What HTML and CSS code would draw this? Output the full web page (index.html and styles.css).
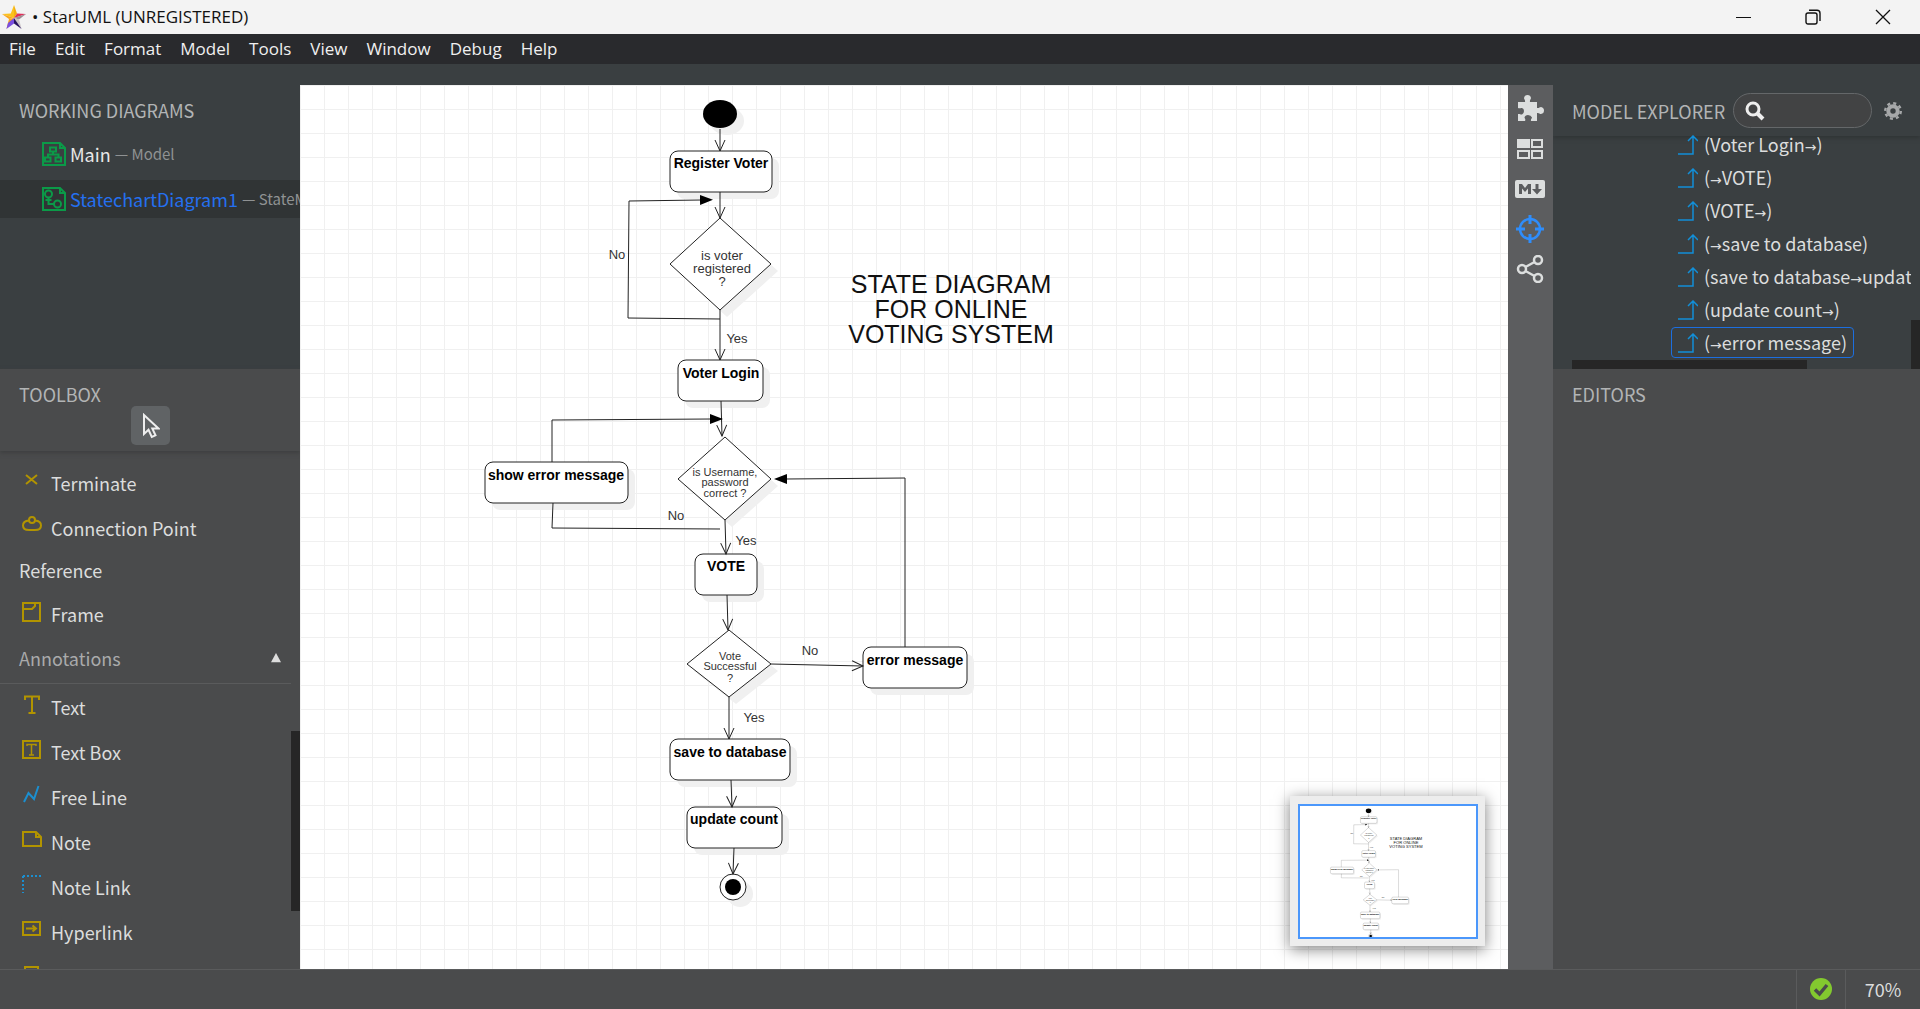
FILE: index.html
```html
<!DOCTYPE html>
<html lang="en">
<head>
<meta charset="utf-8">
<title>StarUML (UNREGISTERED)</title>
<link rel="stylesheet" href="styles.css">
</head>
<body>
<div class="app">
  <header class="titlebar">
    <svg class="logo" width="24" height="24" viewBox="0 0 24 24" aria-hidden="true">
      <path fill="#fbc21c" d="M12 0 L8.8 8.6 L0 9 L12 13 Z"/>
      <path fill="#f3b012" d="M12 0 L15 8.6 L12 13 Z"/>
      <path fill="#e0305a" d="M15 8.6 L24 9 L12 13 Z"/>
      <path fill="#f9a51c" d="M0 9 L7 14 L12 13 Z"/>
      <path fill="#9a8f93" d="M24 9 L17 14.6 L12 13 Z"/>
      <path fill="#c9c2c4" d="M17 14.6 L19.6 24 L12 13 Z"/>
      <path fill="#f9a51c" d="M7 14 L4.400 24 L12 13 Z"/>
      <path fill="#7a4fe0" d="M6 18 L4.4 24 L12 18.6 L12 13 Z"/>
      <path fill="#2b1560" d="M12 13 L19.6 24 L12 18.6 Z"/>
    </svg>
    <h1 class="window-title">• StarUML (UNREGISTERED)</h1>
    <div class="window-buttons">
      <button class="window-button" aria-label="Minimize"><svg width="16" height="16" viewBox="0 0 16 16"><path d="M1 8.5H16" stroke="#111" fill="none"/></svg></button>
      <button class="window-button" aria-label="Restore"><svg width="16" height="16" viewBox="0 0 16 16" fill="none" stroke="#111" stroke-width="1.4"><rect x="1" y="4" width="11" height="11" rx="2"/><path d="M4 1.2H12Q15 1.2 15 4.2V12"/></svg></button>
      <button class="window-button" aria-label="Close"><svg width="16" height="16" viewBox="0 0 16 16"><path d="M1 1L15 15M15 1L1 15" stroke="#111" stroke-width="1.3" fill="none"/></svg></button>
    </div>
  </header>
  <nav class="menubar">
    <button class="menu-item">File</button>
    <button class="menu-item">Edit</button>
    <button class="menu-item">Format</button>
    <button class="menu-item">Model</button>
    <button class="menu-item">Tools</button>
    <button class="menu-item">View</button>
    <button class="menu-item">Window</button>
    <button class="menu-item">Debug</button>
    <button class="menu-item">Help</button>
  </nav>
  <div class="workspace">
    <aside class="sidebar">
      <section class="diagrams">
        <h2 class="panel-title">WORKING DIAGRAMS</h2>
        <div class="diagram-list">
          <a class="diagram-row" href="#main">
            <svg class="doc-icon" width="24" height="24" viewBox="0 0 24 24"><path d="M1 1H18L23 6V23H1Z M18 1V6H23 M8 5.500H14V9.500H8Z M3 15.500H8.500V19.500H3Z M13.500 15.500H19V19.500H13.500Z M11 9.500V12.500 M6 15.500V12.500H16.500V15.500"/></svg>
            <span class="diagram-name">Main</span><span class="diagram-owner">— Model</span>
          </a>
          <a class="diagram-row selected" href="#statechart">
            <svg class="doc-icon" width="24" height="24" viewBox="0 0 24 24"><path d="M1 1H18L23 6V23H1Z M18 1V6H23 M6.500 11V17H12 M3.500 13H9.500"/><circle cx="6.500" cy="7" r="3.500"/><circle cx="15.500" cy="17" r="3.500"/></svg>
            <span class="diagram-name">StatechartDiagram1</span><span class="diagram-owner">— StateMachine1</span>
          </a>
        </div>
      </section>
      <section class="toolbox">
        <div class="toolbox-head">
          <h2 class="panel-title">TOOLBOX</h2>
          <button class="pointer-tool" aria-label="Select"><svg width="20" height="26" viewBox="0 0 20 26"><path d="M4 2V21L8.500 16.800L11.800 24L15.500 22.300L12.300 15.500H18.500Z" fill="none" stroke="#eee" stroke-width="2"/></svg></button>
        </div>
        <div class="tool-list">
          <button class="tool"><svg class="tool-icon" viewBox="0 0 20 20"><path d="M4 4L15 13M15 4L4 13"/></svg>Terminate</button>
          <button class="tool"><svg class="tool-icon" viewBox="0 0 20 20"><path d="M7 4.500Q1 5 1 9.500T7 14H13Q19 14 19 9.500T13 4.500"/><circle cx="10" cy="4" r="3"/></svg>Connection Point</button>
          <h3 class="group-name">Reference</h3>
          <button class="tool"><svg class="tool-icon" viewBox="0 0 20 20"><path d="M1 1H18V19H1Z M1 7H10L13 4V1"/></svg>Frame</button>
          <button class="group-toggle">Annotations<svg width="10" height="10" viewBox="0 0 12 12"><path d="M6 0L12 11H0Z" fill="#ddd"/></svg></button>
          <button class="tool"><svg class="tool-icon" viewBox="0 0 20 20"><path d="M3 5V1.500H17V5 M10 1.500V18 M6.500 18H13.500"/></svg>Text</button>
          <button class="tool"><svg class="tool-icon" viewBox="0 0 20 20"><path d="M1 1H18V18H1Z"/><path stroke-width="1.500" d="M5 6V4.500H14V6 M9.500 4.500V15 M7 15H12"/></svg>Text Box</button>
          <button class="tool"><svg class="tool-icon blue" viewBox="0 0 20 20"><path d="M2 17L6.500 8L12 14L16.500 1"/></svg>Free Line</button>
          <button class="tool"><svg class="tool-icon" viewBox="0 0 20 20"><path d="M1 2H14L19 7V16H1Z M14 2V7H19"/></svg>Note</button>
          <button class="tool"><svg class="tool-icon blue" viewBox="0 0 20 20"><path stroke-dasharray="2 2" stroke-width="2" d="M1 1H20M1 1V18"/></svg>Note Link</button>
          <button class="tool"><svg class="tool-icon" viewBox="0 0 20 20"><path d="M1 2H18V15H1Z M4 8.500H14M10.500 5.500L14 8.500L10.500 11.500"/></svg>Hyperlink</button>
          <button class="tool" aria-label="Image"><svg class="tool-icon" viewBox="0 0 20 20"><path d="M3 2H16V15H3Z"/></svg></button>
        </div>
      </section>
    </aside>

    <main class="canvas">
      <svg class="diagram" role="img" aria-label="State diagram for online voting system">
        <defs>
          <marker id="open" markerUnits="userSpaceOnUse" markerWidth="14" markerHeight="14" refX="12" refY="6" orient="auto"><path d="M1 1L12 6L1 11" fill="none" stroke="#222"/></marker>
          <marker id="solid" markerUnits="userSpaceOnUse" markerWidth="14" markerHeight="12" refX="1" refY="5" orient="auto"><path d="M0 0L13 5L0 10Z" fill="#000"/></marker>
        </defs>
        <g id="chart">
          <g class="shade">
            <ellipse cx="427" cy="36" rx="17" ry="14"/>
            <rect x="377" y="73" width="102" height="41" rx="8"/>
            <path d="M427 140L478 186L427 232L377 186Z"/>
            <rect x="385" y="282" width="85" height="41" rx="8"/>
            <path d="M432 359L478 401L432 442L385 401Z"/>
            <rect x="192" y="384" width="143" height="41" rx="8"/>
            <rect x="402" y="476" width="62" height="41" rx="8"/>
            <path d="M436 552L478 586L436 619L394 586Z"/>
            <rect x="570" y="569" width="104" height="41" rx="8"/>
            <rect x="377" y="661" width="120" height="41" rx="8"/>
            <rect x="394" y="729" width="95" height="41" rx="8"/>
            <circle cx="440" cy="809" r="13"/>
          </g>
          <g class="shape">
            <rect x="370" y="66" width="102" height="41" rx="8"/>
            <path d="M420 133L471 179L420 225L370 179Z"/>
            <rect x="378" y="275" width="85" height="41" rx="8"/>
            <path d="M425 352L471 394L425 435L378 394Z"/>
            <rect x="185" y="377" width="143" height="41" rx="8"/>
            <rect x="395" y="469" width="62" height="41" rx="8"/>
            <path d="M429 545L471 579L429 612L387 579Z"/>
            <rect x="563" y="562" width="104" height="41" rx="8"/>
            <rect x="370" y="654" width="120" height="41" rx="8"/>
            <rect x="387" y="722" width="95" height="41" rx="8"/>
            <circle cx="433" cy="802" r="13"/>
          </g>
          <ellipse cx="420" cy="29" rx="17" ry="14"/>
          <circle cx="433" cy="802" r="8"/>
          <g class="flow">
            <path marker-end="url(#open)" d="M420 44V66"/>
            <path marker-end="url(#open)" d="M420 107V133"/>
            <path marker-end="url(#open)" d="M420 225V275"/>
            <path marker-end="url(#open)" d="M421 316L422 351"/>
            <path marker-end="url(#open)" d="M425 435L426 469"/>
            <path marker-end="url(#open)" d="M427 510L428 545"/>
            <path marker-end="url(#open)" d="M471 579L563 581"/>
            <path marker-end="url(#open)" d="M429 612V654"/>
            <path marker-end="url(#open)" d="M431 695L432 722"/>
            <path marker-end="url(#open)" d="M434 763L433 789"/>
            <path marker-end="url(#solid)" d="M420 234L328 233L329 116L401 115"/>
            <path marker-end="url(#solid)" d="M252 377V335L411 334"/>
            <path d="M253 418L252 443L420 444"/>
            <path marker-end="url(#solid)" d="M605 562V393L486 394"/>
          </g>
          <g class="state-name">
            <text x="421" y="83">Register Voter</text>
            <text x="421" y="293">Voter Login</text>
            <text x="256" y="395">show error message</text>
            <text x="426" y="486">VOTE</text>
            <text x="615" y="580">error message</text>
            <text x="430" y="672">save to database</text>
            <text x="434" y="739">update count</text>
          </g>
          <g class="label">
            <text><tspan x="422" y="175">is voter</tspan><tspan x="422" y="188">registered</tspan><tspan x="422" y="201">?</tspan></text>
            <text x="317" y="174">No</text><text x="437" y="258">Yes</text>
            <text x="376" y="435">No</text><text x="446" y="460">Yes</text>
            <text x="510" y="570">No</text><text x="454" y="637">Yes</text>
          </g>
          <g class="label small">
            <text><tspan x="425" y="391">is Username,</tspan><tspan x="425" y="401">password</tspan><tspan x="425" y="412">correct ?</tspan></text>
            <text><tspan x="430" y="575">Vote</tspan><tspan x="430" y="585">Successful</tspan><tspan x="430" y="597">?</tspan></text>
          </g>
          <text class="heading"><tspan x="651" y="208">STATE DIAGRAM</tspan><tspan x="651" y="233">FOR ONLINE</tspan><tspan x="651" y="258">VOTING SYSTEM</tspan></text>
        </g>
      </svg>
      <div class="minimap"><svg class="minimap-view" viewBox="0 0 1080 808" aria-hidden="true"><use href="#chart"/></svg></div>
    </main>

    <nav class="strip">
      <button class="strip-button" aria-label="Extensions"><svg width="28" height="28" viewBox="0 0 28 28"><path fill="#dcdede" d="M2 7H9C9.500 5 8 4.500 8 3Q8.500 0 11.500 0T15 3C15 4.500 13.500 5 14 7H21V13C23 13.500 23.500 12 25 12Q28 12.500 28 15.500T25 19C23.500 19 23 17.500 21 18V26H15C14.500 24 16 23.500 16 22.500Q15 20 12 20T8.500 22.500C8.500 23.500 10 24 9 26H2V19C4 18.500 4.500 20 6 19.500Q8 18.500 8 16T6 13C4.500 12.500 4 14 2 13Z"/></svg></button>
      <button class="strip-button" aria-label="Layout"><svg width="28" height="28" viewBox="0 0 28 28" fill="none" stroke="#dcdede" stroke-width="2"><rect x="2" y="5" width="11" height="7" fill="#dcdede"/><rect x="16" y="5" width="10" height="7"/><rect x="2" y="16" width="11" height="7"/><rect x="16" y="16" width="10" height="7"/></svg></button>
      <button class="strip-button" aria-label="Markdown"><svg width="30" height="28" viewBox="0 0 30 28"><rect y="5" width="30" height="18" rx="2" fill="#dcdede"/><path fill="#5c5d5f" d="M4 19V9H7L10 13L13 9H16V19H13V13.500L10 17L7 13.500V19Z M20.500 9H23.500V14H27L22 19.500L17 14H20.500Z"/></svg></button>
      <button class="strip-button" aria-label="Navigate"><svg width="28" height="28" viewBox="0 0 28 28" fill="none" stroke="#2f8dfb" stroke-width="2.500"><circle cx="14" cy="14" r="10"/><path stroke-width="3" d="M14 0V9M14 19V28M0 14H9M19 14H28"/></svg></button>
      <button class="strip-button" aria-label="Share"><svg width="28" height="28" viewBox="0 0 28 28" fill="none" stroke="#dcdede" stroke-width="2.500"><circle cx="6" cy="14" r="4"/><circle cx="22" cy="5" r="4"/><circle cx="22" cy="23" r="4"/><path d="M9.500 12L18.500 7M9.500 16L18.500 21"/></svg></button>
    </nav>

    <aside class="inspector">
      <section class="explorer">
        <div class="explorer-head">
          <h2 class="panel-title">MODEL EXPLORER</h2>
          <label class="search"><svg width="20" height="20" viewBox="0 0 20 20" fill="none" stroke="#eee"><circle cx="8" cy="8" r="6" stroke-width="3"/><path d="M12 12L18 18" stroke-width="4"/></svg><input class="search-input" type="text" aria-label="Search"></label>
          <button class="settings" aria-label="Settings"><svg width="18" height="18" viewBox="0 0 18 18" fill="none" stroke="#a6a8a9"><circle cx="9" cy="9" r="4.700" stroke-width="4"/><circle cx="9" cy="9" r="7.800" stroke-width="2.400" stroke-dasharray="3.060 3.060"/></svg></button>
        </div>
        <div class="tree">
          <button class="node"><svg class="node-icon" viewBox="0 0 20 20"><path d="M0 19H15V1M10 6L15 1L20 6"/></svg><span>(Voter Login<span class="arrow">→</span>)</span></button>
          <button class="node"><svg class="node-icon" viewBox="0 0 20 20"><path d="M0 19H15V1M10 6L15 1L20 6"/></svg><span>(<span class="arrow">→</span>VOTE)</span></button>
          <button class="node"><svg class="node-icon" viewBox="0 0 20 20"><path d="M0 19H15V1M10 6L15 1L20 6"/></svg><span>(VOTE<span class="arrow">→</span>)</span></button>
          <button class="node"><svg class="node-icon" viewBox="0 0 20 20"><path d="M0 19H15V1M10 6L15 1L20 6"/></svg><span>(<span class="arrow">→</span>save to database)</span></button>
          <button class="node"><svg class="node-icon" viewBox="0 0 20 20"><path d="M0 19H15V1M10 6L15 1L20 6"/></svg><span>(save to database<span class="arrow">→</span>update count)</span></button>
          <button class="node"><svg class="node-icon" viewBox="0 0 20 20"><path d="M0 19H15V1M10 6L15 1L20 6"/></svg><span>(update count<span class="arrow">→</span>)</span></button>
          <button class="node selected"><svg class="node-icon" viewBox="0 0 20 20"><path d="M0 19H15V1M10 6L15 1L20 6"/></svg><span>(<span class="arrow">→</span>error message)</span></button>
        </div>
      </section>
      <section class="editors">
        <h2 class="panel-title">EDITORS</h2>
      </section>
    </aside>
  </div>
  <footer class="statusbar">
    <div class="status-cell"><svg width="22" height="22" viewBox="0 0 22 22"><circle cx="11" cy="11" r="11" fill="#83c92f"/><path d="M5 11.500L9.500 16L17 7" fill="none" stroke="#4a4b4c" stroke-width="3.500"/></svg></div>
    <button class="status-cell zoom-level">70%</button>
  </footer>
</div>
</body>
</html>
```
FILE: styles.css
```css
* { box-sizing: border-box; }
body { margin: 0; }
button {
  margin: 0;
  padding: 0;
  border: 0;
  background: none;
  color: inherit;
  font: inherit;
  text-align: left;
  white-space: nowrap;
}
h1, h2, h3 { margin: 0; font-size: inherit; font-weight: 400; }
svg { flex: none; }

.app {
  display: flex;
  flex-direction: column;
  height: 100vh;
  overflow: hidden;
  background: #3a3f41;
  color: #dcdddd;
  font: 18px/24px "Noto Sans CJK JP", "Noto Sans", sans-serif;
}

.titlebar {
  display: flex;
  align-items: center;
  gap: 6px;
  height: 34px;
  padding: 0 2px;
  background: #f3f3f3;
  color: #111;
  font: 17px/24px "Open Sans", sans-serif;
}
.window-title { flex: 1; }
.window-buttons { display: flex; }
.window-button {
  display: flex;
  align-items: center;
  justify-content: center;
  width: 70px;
}

.menubar {
  display: flex;
  gap: 19px;
  height: 30px;
  padding-left: 9px;
  background: #292a2d;
  color: #f0f0f0;
  font: 17px/28px "Open Sans", sans-serif;
}

.workspace {
  display: flex;
  flex: 1;
  min-height: 0;
  padding-top: 21px;
}
.panel-title { color: #b2b4b5; }

.sidebar { display: flex; flex-direction: column; width: 300px; }
.diagrams { height: 284px; padding-top: 13px; }
.diagrams .panel-title, .toolbox .panel-title { padding-left: 19px; }
.diagram-list {
  display: flex;
  flex-direction: column;
  gap: 7px;
  margin-top: 13px;
}
.diagram-row {
  display: flex;
  align-items: center;
  gap: 4px;
  height: 38px;
  padding-left: 42px;
  overflow: hidden;
  color: #e8e8e8;
  text-decoration: none;
  white-space: nowrap;
}
.diagram-row.selected { background: #303435; }
.diagram-row.selected .diagram-name { color: #2470f0; }
.diagram-owner { color: #8f9293; font-size: 15px; }
.doc-icon { fill: none; stroke: #0b9a48; stroke-width: 2; }

.toolbox {
  display: flex;
  flex: 1;
  flex-direction: column;
  min-height: 0;
  background: #4a4b4c;
}
.toolbox-head {
  display: flex;
  flex-direction: column;
  height: 82px;
  padding-top: 13px;
  box-shadow: 0 2px 4px #3e3f40;
}
.pointer-tool {
  display: flex;
  align-items: center;
  justify-content: center;
  align-self: center;
  width: 39px;
  height: 39px;
  border-radius: 5px;
  background: #606365;
}
.tool-list {
  position: relative;
  flex: 1;
  min-height: 0;
  padding-top: 9px;
  overflow: hidden;
}
.tool-list::after {
  content: "";
  position: absolute;
  top: 280px;
  right: 0;
  width: 9px;
  height: 180px;
  background: #262626;
}
.tool { display: flex; align-items: center; gap: 9px; width: 100%; height: 45px; padding-left: 22px; }
.tool-icon {
  width: 20px;
  height: 20px;
  margin-bottom: 4px;
  overflow: visible;
  fill: none;
  stroke: #b29400;
  stroke-width: 2;
}
.tool-icon.blue { stroke: #1b8fd0; }
.group-name { height: 41px; padding: 8px 19px; }
.group-toggle {
  display: flex;
  align-items: center;
  justify-content: space-between;
  width: 291px;
  height: 48px;
  padding: 0 10px 3px 19px;
  border-bottom: 1px solid #5a5b5c;
  color: #a9aaab;
}

.canvas {
  position: relative;
  flex: 1;
  min-width: 0;
  background: #fff;
  background-image:
    linear-gradient(to right, #f0f0f0 1px, transparent 1px),
    linear-gradient(#f0f0f0 1px, transparent 1px);
  background-size: 24px 24px;
}
.diagram { display: block; width: 100%; height: 100%; }
.shade { fill: #f0f0f0; }
.shape { fill: #fff; stroke: #222; stroke-width: 1; }
.flow { fill: none; stroke: #222; }
.state-name, .label, .heading {
  font-family: "Liberation Sans", Arial, sans-serif;
  text-anchor: middle;
}
.state-name { font-size: 14px; font-weight: 700; }
.label { font-size: 13px; fill: #333; }
.label.small { font-size: 11px; }
.heading { font-size: 25px; fill: #111; }
.minimap {
  position: absolute;
  right: 23px;
  bottom: 23px;
  padding: 8px 7px 7px 8px;
  background: #ededed;
  box-shadow: 0 3px 14px rgba(0, 0, 0, 0.5);
}
.minimap-view {
  display: block;
  width: 180px;
  height: 135px;
  border: 2px solid #4b97fb;
  background: #fff;
}

.strip {
  display: flex;
  flex-direction: column;
  width: 45px;
  padding: 4px 2px 0 0;
  background: #5c5d5f;
}
.strip-button { display: flex; align-items: center; justify-content: center; height: 40px; }

.inspector { display: flex; flex-direction: column; width: 367px; }
.explorer { position: relative; height: 284px; overflow: hidden; }
.explorer-head {
  display: flex;
  align-items: center;
  gap: 8px;
  height: 51px;
  padding: 0 18px 0 19px;
  box-shadow: 0 2px 4px #303435;
}
.explorer-head .panel-title { white-space: nowrap; }
.search {
  display: flex;
  flex: 1;
  align-items: center;
  min-width: 0;
  height: 35px;
  margin-right: 4px;
  padding-left: 11px;
  border: 1px solid #646769;
  border-radius: 18px;
  background: #424344;
}
.search-input { flex: 1; min-width: 0; border: 0; outline: 0; background: none; color: inherit; font: inherit; }
.settings { display: flex; }
.tree {
  display: flex;
  flex-direction: column;
  align-items: flex-start;
  gap: 2px;
  margin: -7px 9px 0 0;
  padding-left: 118px;
  overflow: hidden;
}
.node {
  display: flex;
  align-items: center;
  gap: 6px;
  height: 31px;
  padding: 0 6px;
  border: 1px solid transparent;
  border-radius: 4px;
}
.arrow { font: 14px/20px "DejaVu Sans", sans-serif; }
.node.selected { border-color: #1c6fe0; }
.node-icon { width: 20px; height: 20px; fill: none; stroke: #128fd8; stroke-width: 1.5; }
.explorer::before, .explorer::after { content: ""; position: absolute; bottom: 0; background: #262626; }
.explorer::before { left: 19px; width: 235px; height: 9px; }
.explorer::after { right: 0; width: 9px; height: 49px; }
.editors { flex: 1; padding: 13px 19px; background: #4a4b4c; }

.statusbar {
  display: flex;
  justify-content: flex-end;
  height: 40px;
  border-top: 1px solid #5a5b5c;
  background: #4a4b4c;
}
.status-cell {
  display: flex;
  align-items: center;
  justify-content: center;
  width: 49px;
  padding-bottom: 2px;
  border-left: 1px solid #5a5b5c;
}
.zoom-level { width: 75px; }
```
